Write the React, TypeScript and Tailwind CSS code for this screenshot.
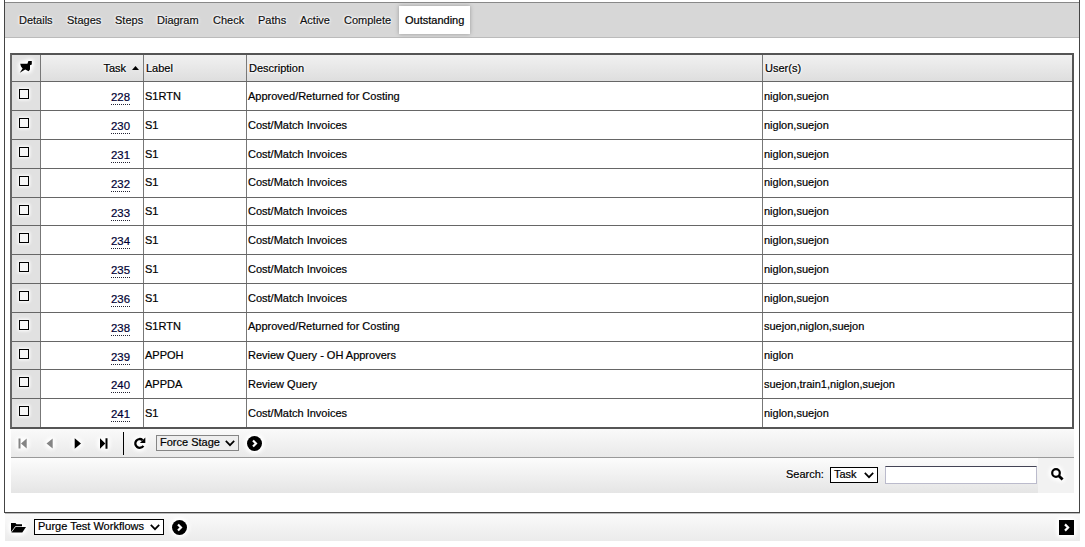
import React from 'react';

const glow = '[text-shadow:0_0_2px_#fff,0_0_2px_#fff,0_0_3px_#fff,0_0_4px_#fff]';
const halo = 'overflow-visible [filter:drop-shadow(0_0_2px_#fff)_drop-shadow(0_0_2px_#fff)_drop-shadow(0_0_1px_#fff)]';

const tabs = [
  { name: 'Details', width: 'w-[48px]' },
  { name: 'Stages', width: 'w-[48px]' },
  { name: 'Steps', width: 'w-[42px]' },
  { name: 'Diagram', width: 'w-[56px]' },
  { name: 'Check', width: 'w-[45px]' },
  { name: 'Paths', width: 'w-[42px]' },
  { name: 'Active', width: 'w-[44px]' },
  { name: 'Complete', width: 'w-[55px]' },
];

const costing = 'Approved/Returned for Costing';
const match = 'Cost/Match Invoices';
const both = 'niglon,suejon';

const rows = [
  { id: 228, label: 'S1RTN', text: costing, users: both, h: 'h-[29px]', pad: 'pt-[8px]' },
  { id: 230, label: 'S1', text: match, users: both, h: 'h-[29px]', pad: 'pt-[8px]' },
  { id: 231, label: 'S1', text: match, users: both, h: 'h-[29px]', pad: 'pt-[8px]' },
  { id: 232, label: 'S1', text: match, users: both, h: 'h-[29px]', pad: 'pt-[7px]' },
  { id: 233, label: 'S1', text: match, users: both, h: 'h-[28px]', pad: 'pt-[7px]' },
  { id: 234, label: 'S1', text: match, users: both, h: 'h-[29px]', pad: 'pt-[8px]' },
  { id: 235, label: 'S1', text: match, users: both, h: 'h-[29px]', pad: 'pt-[8px]' },
  { id: 236, label: 'S1', text: match, users: both, h: 'h-[29px]', pad: 'pt-[8px]' },
  { id: 238, label: 'S1RTN', text: costing, users: 'suejon,niglon,suejon', h: 'h-[29px]', pad: 'pt-[7px]' },
  { id: 239, label: 'APPOH', text: 'Review Query - OH Approvers', users: 'niglon', h: 'h-[28px]', pad: 'pt-[7px]' },
  { id: 240, label: 'APPDA', text: 'Review Query', users: 'suejon,train1,niglon,suejon', h: 'h-[29px]', pad: 'pt-[8px]' },
  { id: 241, label: 'S1', text: match, users: both, h: 'h-[28px]', pad: 'pt-[8px]' },
];

const columns = 'grid grid-cols-[29px_103px_103px_516px_310px]';

function Chevron() {
  return (
    <svg width="10" height="7" viewBox="0 0 10 7" fill="none" stroke="#000" strokeWidth="1.7">
      <path d="M0.8 0.9 L5 5.2 L9.2 0.9" />
    </svg>
  );
}

function Select({ text, className }: { text: string; className: string }) {
  return (
    <button className={`flex items-center justify-between border pl-[3px] pr-[3px] whitespace-nowrap ${className}`}>
      <span className="-mt-px leading-[13px]">{text}</span>
      <Chevron />
    </button>
  );
}

function GoIcon() {
  return (
    <svg className={halo} width="15" height="15" viewBox="0 0 15 15">
      <circle cx="7.5" cy="7.5" r="7.5" fill="#000" />
      <path d="M6 4.4 L9 7.5 L6 10.6" fill="none" stroke="#fff" strokeWidth="2.2" />
    </svg>
  );
}

function PinIcon() {
  return (
    <svg className={halo} width="14" height="14" viewBox="0 0 14 14">
      <path d="M9.4 1 H12.8 V4.4 L11 5.2 V9.6 L9.6 11.2 L6.2 9.6 L0.8 12.8 L3.6 8.6 L2 6.4 L1.2 3.8 H8.4 Z" fill="#000" />
    </svg>
  );
}

function Pager() {
  return (
    <div className="flex h-[29px] items-center border-b border-[#999] bg-linear-to-b from-[#fafafa] to-[#e9e9e9] pt-px pl-[7px]">
      <svg className={halo} width="10" height="11" viewBox="0 0 10 11" fill="#858585">
        <path d="M0.5 0.5h2v10h-2zM8.7 0.5v10L3 5.5z" />
      </svg>
      <svg className={`ml-[18px] ${halo}`} width="8" height="11" viewBox="0 0 8 11" fill="#858585">
        <path d="M6.7 0.5v10L0.5 5.5z" />
      </svg>
      <svg className={`ml-[20px] ${halo}`} width="8" height="11" viewBox="0 0 8 11">
        <path d="M0.7 0.2v10.6L7 5.5z" />
      </svg>
      <svg className={`ml-[17px] ${halo}`} width="10" height="11" viewBox="0 0 10 11">
        <path d="M1 0.2v10.6L6.3 5.5zM6.5 0.2h2v10.6h-2z" />
      </svg>
      <div className="ml-[14px] h-[23px] w-px bg-black" />
      <svg className={`ml-[9px] ${halo}`} width="13" height="13" viewBox="0 0 13 13">
        <path d="M9.6 3.1 A4.4 4.4 0 1 0 10.4 8.8" fill="none" stroke="#000" strokeWidth="2.3" />
        <path d="M12.3 0.5v5.6H6.9z" />
      </svg>
      <Select text="Force Stage" className="-mt-px ml-[10px] h-[16px] w-[83px] border-[#858585] bg-[#eee]" />
      <div className="ml-[8px]"><GoIcon /></div>
    </div>
  );
}

export default function App() {
  return (
    <div className="h-[547px] w-[1085px] overflow-hidden bg-white pl-[4px] font-['Liberation_Sans',Arial,sans-serif] text-[11px] leading-[13px] text-black [-webkit-text-stroke:0.2px]">
      <div className="flex h-[513px] w-[1076px] flex-col border-x border-b border-[#444]">
        <div className="h-[2px] shrink-0" />
        <nav className="flex h-[36px] shrink-0 border-t border-b border-t-[#888] border-b-[#bbb] bg-[#d7d7d7] pt-[3px] pl-[14px]">
          {tabs.map((tab) => (
            <a key={tab.name} className={`mt-[8px] shrink-0 text-[#111] ${tab.width} ${glow}`}>{tab.name}</a>
          ))}
          <a className="h-[28px] w-[71px] bg-white pt-[8px] pl-[6px] shadow-[0_0_4px_#999]">Outstanding</a>
        </nav>
        <main className="mt-[15px] ml-[5px] w-[1064px]">
          <div className="border-2 border-[#555] border-l-[#666] border-r-[#555]">
            <div className={`${columns} h-[27px] border-b border-[#666] bg-linear-to-b from-[#f1f1f1] to-[#dedede] leading-[26px]`}>
              <div className="border-r border-[#777] bg-[#e3e3e3] pt-[5px] pl-[7px]"><PinIcon /></div>
              <div className={`flex items-center justify-end border-r border-[#777] pr-[4px] ${glow}`}>
                <span>Task</span>
                <svg className="ml-[6px]" width="7" height="4" viewBox="0 0 7 4"><path d="M3.5 0L7 4H0z" /></svg>
              </div>
              <div className={`border-r border-[#777] pl-[2px] ${glow}`}>Label</div>
              <div className={`border-r border-[#777] pl-[2px] ${glow}`}>Description</div>
              <div className={`pl-[2px] ${glow}`}>User(s)</div>
            </div>
            {rows.map((row, i) => (
              <div key={row.id} className={`${columns} ${row.h} ${i < rows.length - 1 ? 'border-b border-[#666]' : ''}`}>
                <div className="border-r border-[#777] bg-[#e1e1e1] pt-[7px] pl-[7px]">
                  <div className="h-[10px] w-[10px] border border-black bg-[#f7f7f7] shadow-[0_0_3px_1px_#fff]" />
                </div>
                <div className="flex justify-end border-r border-[#777] pt-[9px] pr-[13px]">
                  <a className="h-[14px] border-b border-dotted border-[#223] text-[11.4px] text-[#000033]">{row.id}</a>
                </div>
                <div className={`border-r border-[#777] pl-px ${row.pad}`}>{row.label}</div>
                <div className={`border-r border-[#777] pl-px ${row.pad}`}>{row.text}</div>
                <div className={`pl-px ${row.pad}`}>{row.users}</div>
              </div>
            ))}
          </div>
          <div className="ml-px">
            <Pager />
            <div className="flex h-[35px] items-start bg-linear-to-b from-[#fcfcfc] to-[#e5e5e5]">
              <span className={`mt-[10px] ml-[775px] w-[44px] ${glow}`}>Search:</span>
              <Select text="Task" className="mt-[9px] h-[16px] w-[48px] border-black bg-white" />
              <input aria-label="Search" className="mt-[8px] ml-[7px] h-[18px] w-[152px] border border-[#bbc] border-t-[#445] bg-white" />
              <button className="ml-px flex h-[35px] w-[36px] items-center justify-center bg-[#f2f2f2] pb-[2px] pl-[2px]">
                <svg className={halo} width="13" height="13" viewBox="0 0 13 13" fill="none" stroke="#000">
                  <circle cx="5" cy="5" r="3.8" strokeWidth="2.2" />
                  <path d="M8 8L11.6 11.6" strokeWidth="2.8" />
                </svg>
              </button>
            </div>
          </div>
        </main>
      </div>
      <footer className="ml-px flex h-[28px] w-[1075px] items-start border-t border-[#bbb] bg-linear-to-b from-[#fafafa] to-[#ebebeb] pl-[6px]">
        <svg className={`mt-[8px] ${halo}`} width="15" height="11" viewBox="0 0 15 11">
          <path d="M0 10V1h4.5l1 1.3H11v2H4.3z" />
          <path d="M4.6 4.9h10.4L11.3 10.5H0.4z" />
        </svg>
        <Select text="Purge Test Workflows" className="mt-[5px] ml-[8px] h-[16px] w-[130px] border-black bg-white" />
        <div className="mt-[6px] ml-[8px]"><GoIcon /></div>
        <svg className={`mt-[6px] mr-[6px] ml-auto ${halo}`} width="15" height="15" viewBox="0 0 15 15">
          <path d="M0 0h15v15H0z" />
          <path d="M6 4.4L9.1 7.5L6 10.6" fill="none" stroke="#fff" strokeWidth="2.2" />
        </svg>
      </footer>
    </div>
  );
}
